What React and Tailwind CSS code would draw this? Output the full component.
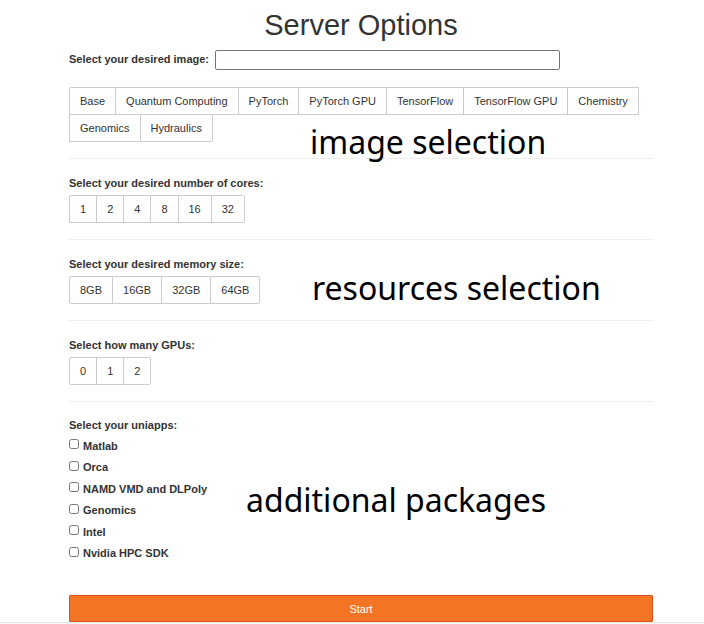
import React from "react";

const images = [
  "Base",
  "Quantum Computing",
  "PyTorch",
  "PyTorch GPU",
  "TensorFlow",
  "TensorFlow GPU",
  "Chemistry",
  "Genomics",
  "Hydraulics",
];
const cores = ["1", "2", "4", "8", "16", "32"];
const memory = ["8GB", "16GB", "32GB", "64GB"];
const gpus = ["0", "1", "2"];
const uniapps = [
  "Matlab",
  "Orca",
  "NAMD VMD and DLPoly",
  "Genomics",
  "Intel",
  "Nvidia HPC SDK",
];

function ButtonGroup({ options, labelledBy }) {
  return (
    <div
      role="group"
      aria-labelledby={labelledBy}
      className="flex flex-wrap pt-px pl-px"
    >
      {options.map((option) => (
        <button
          key={option}
          type="button"
          className="-mt-px -ml-px h-7 border border-[#ccc] bg-white px-[10px] first:rounded-l-[2px] last:rounded-r-[2px]"
        >
          {option}
        </button>
      ))}
    </div>
  );
}

function Note({ className, children }) {
  return (
    <p
      className={
        "absolute whitespace-nowrap font-['Noto_Sans',sans-serif] text-[32px] font-normal leading-[44px] text-black " +
        className
      }
    >
      {children}
    </p>
  );
}

function Section({ id, title, options, children }) {
  return (
    <section className="relative border-b border-[#eee] py-4">
      <h2 id={id} className="mb-1 font-bold leading-4">
        {title}
      </h2>
      <ButtonGroup options={options} labelledBy={id} />
      {children}
    </section>
  );
}

export default function App() {
  return (
    <div className="bg-white font-['Liberation_Sans',Arial,sans-serif] text-[11px] leading-4 text-[#333]">
      <form className="pl-[69px] pr-[51px] pt-[9px]">
        <h1 className="text-center text-[29px] leading-8">Server Options</h1>
        <section className="relative border-b border-[#eee] pt-[9px] pb-4">
          <div className="mb-[17px] flex items-center gap-[6px]">
            <label id="image-label" htmlFor="image" className="pb-[2px] font-bold">
              Select your desired image:
            </label>
            <input
              id="image"
              type="text"
              className="h-5 w-[345px] rounded-[2px] border border-[#767676] px-1"
            />
          </div>
          <ButtonGroup options={images} labelledBy="image-label" />
          <Note className="bottom-[-6px] left-[241px]">image selection</Note>
        </section>
        <Section
          id="cores"
          title="Select your desired number of cores:"
          options={cores}
        />
        <Section
          id="memory"
          title="Select your desired memory size:"
          options={memory}
        >
          <Note className="bottom-[10px] left-[243px]">resources selection</Note>
        </Section>
        <Section id="gpus" title="Select how many GPUs:" options={gpus} />
        <fieldset className="relative pt-[15px] font-bold">
          <legend className="float-left mb-[2px] w-full leading-4">
            Select your uniapps:
          </legend>
          <div className="clear-left grid h-[129px] grid-rows-6">
            {uniapps.map((app) => (
              <div key={app} className="flex items-center gap-1">
                <input
                  id={app}
                  type="checkbox"
                  className="mb-[3px] size-[10px]"
                />
                <label htmlFor={app}>{app}</label>
              </div>
            ))}
          </div>
          <Note className="bottom-[42px] left-[177px]">
            additional packages
          </Note>
        </fieldset>
        <button
          type="submit"
          className="mt-[31px] block h-[27px] w-full rounded-[1px] border border-[#e34f21] bg-[#f37524] text-white"
        >
          Start
        </button>
      </form>
      <footer className="h-[2px] border-t border-[#e7e7e7] bg-[#f8f8f8]" />
    </div>
  );
}
